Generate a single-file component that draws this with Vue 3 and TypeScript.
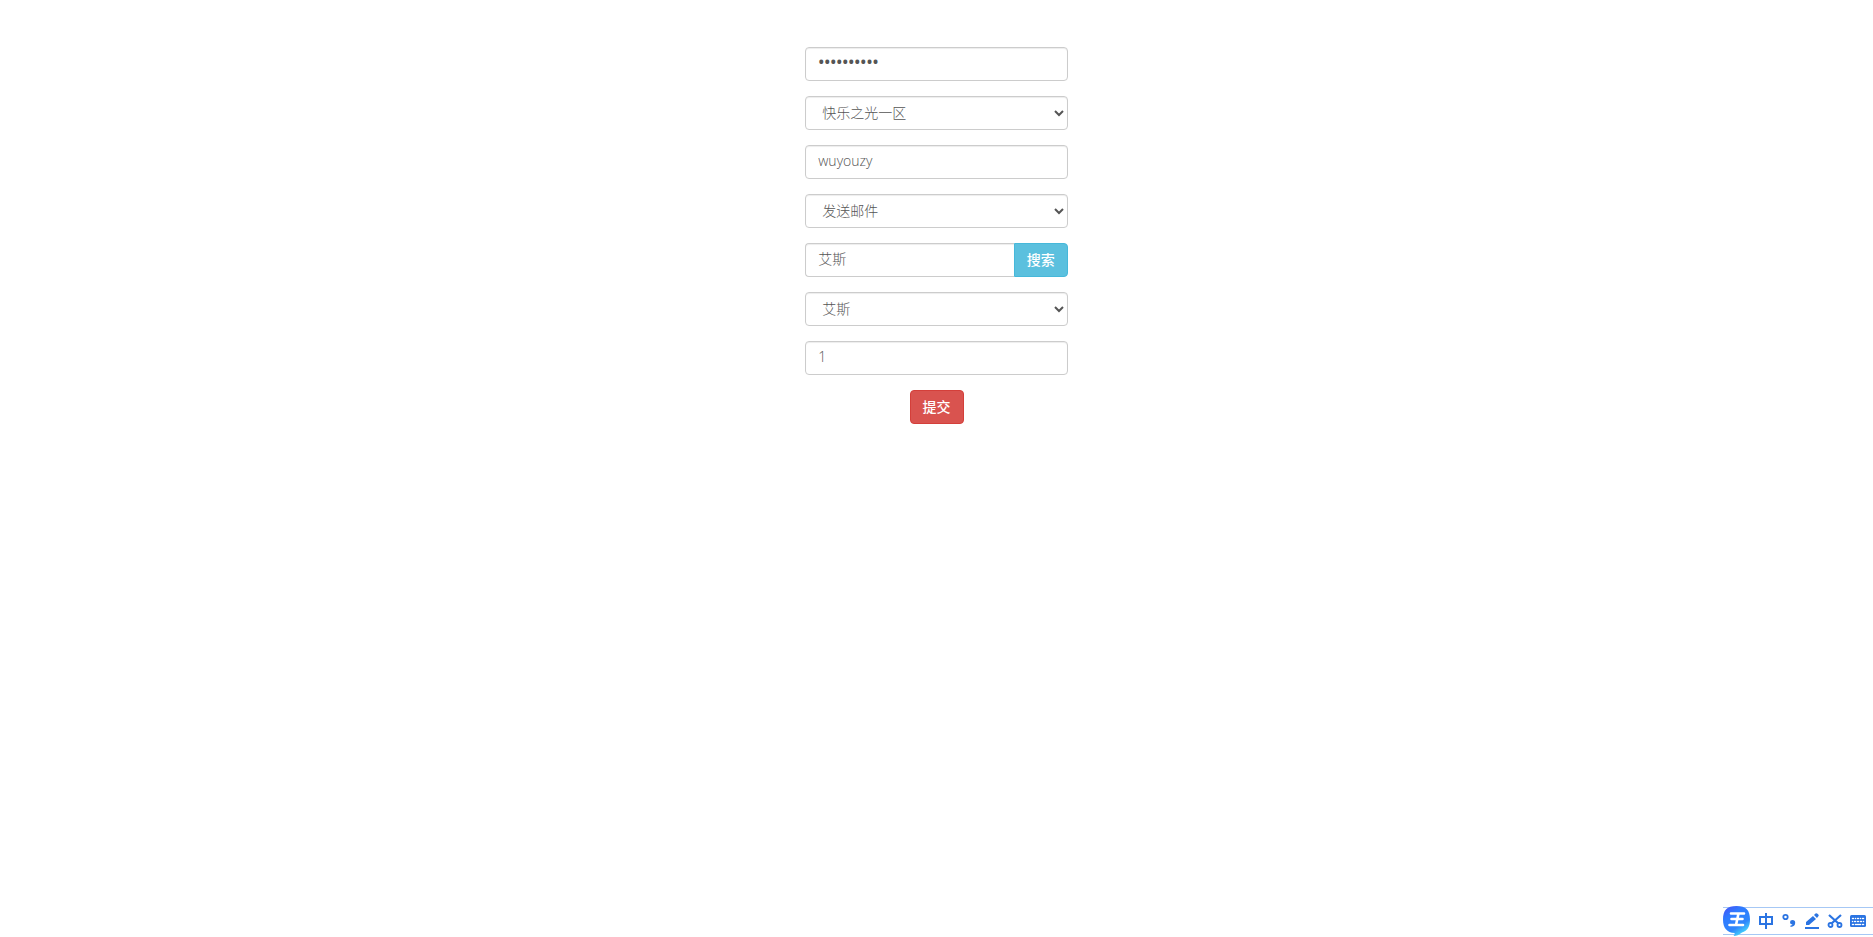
<script setup lang="ts">
import { ref } from 'vue'

const password = ref<string>('wuyou12345')
const zone = ref<string>('快乐之光一区')
const account = ref<string>('wuyouzy')
const action = ref<string>('发送邮件')
const keyword = ref<string>('艾斯')
const item = ref<string>('艾斯')
const amount = ref<string>('1')
</script>

<template>
  <main class="container">
    <form class="form" @submit.prevent>
      <input v-model="password" class="control" type="password" aria-label="密码" autocomplete="off" />
      <select v-model="zone" class="control" aria-label="区服">
        <option>快乐之光一区</option>
      </select>
      <input v-model="account" class="control" type="text" aria-label="账号" />
      <select v-model="action" class="control" aria-label="操作">
        <option>发送邮件</option>
      </select>
      <div class="group">
        <input v-model="keyword" class="control" type="text" aria-label="关键字" />
        <button class="btn info" type="button">搜索</button>
      </div>
      <select v-model="item" class="control" aria-label="物品">
        <option>艾斯</option>
      </select>
      <input v-model="amount" class="control" type="text" aria-label="数量" />
      <button class="btn danger" type="submit">提交</button>
    </form>
  </main>

  <aside class="ime" aria-label="输入法">
    <svg class="logo" viewBox="0 0 28 32" aria-hidden="true">
      <defs>
        <linearGradient id="bubble" x1="0" y1="0" x2="0.6" y2="1">
          <stop offset="0" stop-color="#4a4cf5" />
          <stop offset="0.35" stop-color="#2f7bff" />
          <stop offset="0.75" stop-color="#2f86fb" />
          <stop offset="1" stop-color="#45d5fb" />
        </linearGradient>
      </defs>
      <path d="M13.500 0C23 0 27 4 27 13.500c0 7-2.500 11.500-8 13-3 2.500-5.500 3.500-8.500 3.500 1-1 1.300-2 1-3C4 26.500 0 22 0 13.500 0 4 4 0 13.500 0z" fill="url(#bubble)" />
      <path d="M8 7.500H21M8.500 13H19.500M6.500 19H20M15.500 7.500l-2.500 11.500" fill="none" stroke="#fff" stroke-width="2.600" stroke-linecap="round" />
    </svg>
    <button class="tool" type="button" aria-label="中文">
      <svg viewBox="0 0 16 16"><path d="M2 4h12v7H2zM8 0v16" fill="none" stroke="#2b74e2" stroke-width="2" /></svg>
    </button>
    <button class="tool" type="button" aria-label="标点">
      <svg viewBox="0 0 16 16"><circle cx="4.500" cy="4" r="2.200" fill="none" stroke="#2b74e2" stroke-width="1.800" /><path d="M9.500 14v-1.500q1.500 0 2-1-2.500 0-2.500-2.200 0-2.300 2.500-2.300 2.700 0 2.700 2.800 0 3.700-4.700 4.200z" fill="#2b74e2" /></svg>
    </button>
    <button class="tool" type="button" aria-label="手写">
      <svg viewBox="0 0 16 16"><path d="M1 14h14v2H1zM2 12V9l7-6 3 3-7 6zM10 2l1.500-1.500q1-.8 2 .2l.8.800q.8 1 0 1.700L13 5z" fill="#2b74e2" /></svg>
    </button>
    <button class="tool" type="button" aria-label="截图">
      <svg viewBox="0 0 16 16"><path d="M2 2l9.500 8.500M14 2l-9.500 8.500" fill="none" stroke="#2b74e2" stroke-width="2.200" /><circle cx="3.500" cy="12" r="2" fill="none" stroke="#2b74e2" stroke-width="1.800" /><circle cx="12.500" cy="12" r="2" fill="none" stroke="#2b74e2" stroke-width="1.800" /></svg>
    </button>
    <button class="tool" type="button" aria-label="键盘">
      <svg viewBox="0 0 16 16"><rect y="2" width="16" height="12" rx="1.500" fill="#2b74e2" /><path d="M2 5h2v1H2zM5 5h1v1H5zM7 5h2v1H7zM10 5h1v1h-1zM12 5h2v1h-2zM2 8h1v1H2zM4 8h2v1H4zM7 8h2v1H7zM10 8h2v1h-2zM13 8h1v1h-1zM2 11h2v1H2zM5 11h6v1H5zM12 11h2v1h-2z" fill="#fff" stroke="#fff" stroke-width=".3" /></svg>
    </button>
  </aside>
</template>

<style>
body {
  margin: 0;
  background: #fff;
}
</style>

<style scoped>
.container,
.container *,
.ime,
.ime * {
  box-sizing: border-box;
}

.container {
  max-width: 1170px;
  margin: 0 auto;
  padding-top: 47px;
}

.form {
  display: flex;
  flex-direction: column;
  gap: 15px;
  width: 25%;
  min-width: 240px;
  margin: 0 auto;
  padding: 0 15px;
}

.control,
.btn {
  height: 34px;
  margin: 0;
  border-radius: 4px;
  font-family: "Open Sans", "Noto Sans CJK SC", sans-serif;
  font-size: 14px;
  line-height: 20px;
}

.control {
  width: 100%;
  min-width: 0;
  padding: 4px 12px 8px;
  border: 1px solid #ccc;
  background-color: #fff;
  box-shadow: inset 0 1px 1px rgba(0, 0, 0, 0.075);
  color: #555;
  font-weight: 300;
  outline: none;
}

.control[type="password"] {
  font-size: 16px;
  font-weight: 600;
}

select.control {
  padding: 5px 1px 7px 12px;
}

.group {
  display: flex;
}

.group .control {
  flex: 1;
  border-right: 0;
  border-radius: 4px 0 0 4px;
}

.btn {
  flex: none;
  padding: 6px 12px;
  border: 1px solid;
  color: #fff;
  font-weight: 500;
  cursor: pointer;
}

.info {
  border-color: #46b8da;
  border-radius: 0 4px 4px 0;
  background: #5bc0de;
}

.danger {
  align-self: center;
  border-color: #d43f3a;
  background: #d9534f;
}

.ime {
  position: fixed;
  right: 0;
  bottom: 2px;
  display: flex;
  align-items: center;
  gap: 7px;
  height: 28px;
  padding: 0 7px 0 35px;
  border: solid #a6c8f5;
  border-width: 1px 0;
  background: #fff;
}

.logo {
  position: absolute;
  top: -2px;
  left: 0;
  width: 28px;
  height: 32px;
}

.tool {
  width: 16px;
  height: 16px;
  padding: 0;
  border: 0;
  background: none;
  cursor: pointer;
}

.tool svg {
  display: block;
  width: 16px;
  height: 16px;
}
</style>
